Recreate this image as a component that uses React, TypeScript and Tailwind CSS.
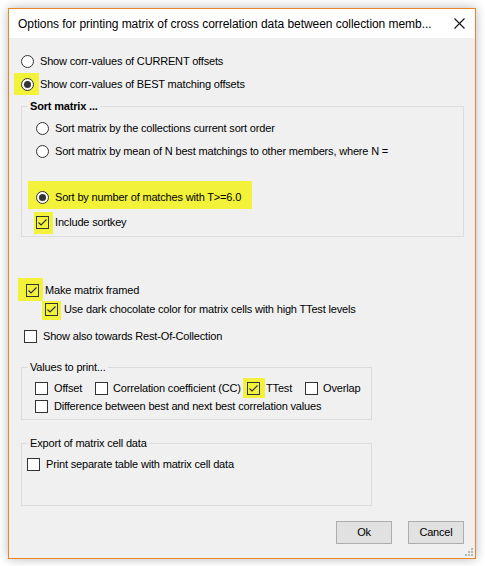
import React from "react";

const Radio = ({ checked = false }: { checked?: boolean }) => (
  <span className="relative flex h-[13px] w-[13px] shrink-0 items-center justify-center rounded-full border border-[#333333] bg-white">
    {checked && <span className="h-[7px] w-[7px] rounded-full bg-[#333333]" />}
  </span>
);

const Check = ({ checked = false, yellow = false }: { checked?: boolean; yellow?: boolean }) => (
  <span
    className={
      "relative flex h-[13px] w-[13px] shrink-0 items-center justify-center border border-[#333333] " +
      (yellow ? "bg-transparent" : "bg-white")
    }
  >
    {checked && (
      <svg width="11" height="11" viewBox="0 0 11 11" className="block">
        <path d="M1.5 5.5 L4 8 L9.5 2.5" fill="none" stroke="#2b2b2b" strokeWidth="1.1" />
      </svg>
    )}
  </span>
);

export default function App() {
  return (
    <div className="h-[566px] w-[485px] bg-white pl-[8px] pt-[8px] text-[11px] tracking-[-0.17px] text-black" style={{ fontFamily: '"Liberation Sans", Arial, sans-serif' }}>
      <div className="flex h-[551px] w-[468px] flex-col border border-[#e9862a] bg-[#f0f0f0] shadow-[0_0_10px_rgba(0,0,0,0.28)]">
        {/* Title bar */}
        <div className="flex h-[29px] shrink-0 items-center bg-white pl-[9px] pr-[10px]">
          <span className="flex-1 whitespace-nowrap text-[12px] leading-none tracking-[-0.05px] text-black">
            Options for printing matrix of cross correlation data between collection memb...
          </span>
          <svg width="11" height="11" viewBox="0 0 11 11">
            <path d="M0.5 0.5 L10.5 10.5 M10.5 0.5 L0.5 10.5" stroke="#111" strokeWidth="1.1" />
          </svg>
        </div>

        {/* Content */}
        <div className="relative flex flex-1 flex-col">
          <div className="ml-[12px] mt-[15px] flex h-[16px] items-center">
            <Radio />
            <span className="ml-[6px]">Show corr-values of CURRENT offsets</span>
          </div>
          <div className="ml-[12px] mt-[7px] flex h-[16px] items-center">
            <span className="relative flex">
              <span className="absolute left-[-7px] top-[-5px] h-[22px] w-[25px] bg-[#f2f23a]" />
              <Radio checked />
            </span>
            <span className="relative ml-[6px]">Show corr-values of BEST matching offsets</span>
          </div>

          {/* Sort matrix group */}
          <div className="relative ml-[12px] mt-[14px] flex h-[131px] w-[443px] flex-col border border-[#dcdcdc] pl-[14px]">
            <span className="absolute left-[6px] top-[-8px] bg-[#f0f0f0] px-[2px] font-bold leading-[14px]">Sort matrix ...</span>
            <div className="mt-[13px] flex h-[16px] items-center">
              <Radio />
              <span className="ml-[6px]">Sort matrix by the collections current sort order</span>
            </div>
            <div className="mt-[7px] flex h-[16px] items-center">
              <Radio />
              <span className="ml-[6px]">Sort matrix by mean of N best matchings to other members, where N =</span>
            </div>
            <div className="relative mt-[30px] flex h-[16px] items-center">
              <span className="absolute left-[-8px] top-[-8px] h-[28px] w-[224px] bg-[#f2f23a]" />
              <span className="relative flex"><Radio checked /></span>
              <span className="relative ml-[6px]">Sort by number of matches with T&gt;=6.0</span>
            </div>
            <div className="mt-[9px] flex h-[16px] items-center">
              <span className="relative flex">
                <span className="absolute left-[-2px] top-[-4px] h-[22px] w-[19px] bg-[#f2f23a]" />
                <Check checked yellow />
              </span>
              <span className="ml-[6px]">Include sortkey</span>
            </div>
          </div>

          <div className="ml-[17px] mt-[45px] flex h-[16px] items-center">
            <span className="relative flex">
              <span className="absolute left-[-8px] top-[-6px] h-[23px] w-[25px] bg-[#f2f23a]" />
              <Check checked yellow />
            </span>
            <span className="ml-[6px]">Make matrix framed</span>
          </div>
          <div className="ml-[36px] mt-[3px] flex h-[16px] items-center">
            <span className="relative flex">
              <span className="absolute left-[-3px] top-[-2px] h-[19px] w-[19px] bg-[#f2f23a]" />
              <Check checked yellow />
            </span>
            <span className="ml-[6px]">Use dark chocolate color for matrix cells with high TTest levels</span>
          </div>
          <div className="ml-[15px] mt-[11px] flex h-[16px] items-center">
            <Check />
            <span className="ml-[6px]">Show also towards Rest-Of-Collection</span>
          </div>

          {/* Values to print */}
          <div className="relative ml-[12px] mt-[23px] flex h-[53px] w-[351px] flex-col border border-[#dcdcdc] pl-[13px]">
            <span className="absolute left-[6px] top-[-8px] bg-[#f0f0f0] px-[2px] leading-[14px]">Values to print...</span>
            <div className="mt-[12px] flex h-[16px] items-center">
              <div className="flex w-[60px] shrink-0 items-center">
                <Check />
                <span className="ml-[6px]">Offset</span>
              </div>
              <div className="flex w-[152px] shrink-0 items-center">
                <Check />
                <span className="ml-[5px] whitespace-nowrap">Correlation coefficient (CC)</span>
              </div>
              <div className="flex w-[58px] shrink-0 items-center">
                <span className="relative flex">
                  <span className="absolute left-[-4px] top-[-4px] h-[20px] w-[22px] bg-[#f2f23a]" />
                  <Check checked yellow />
                </span>
                <span className="ml-[6px]">TTest</span>
              </div>
              <div className="flex items-center">
                <Check />
                <span className="ml-[5px]">Overlap</span>
              </div>
            </div>
            <div className="mt-[2px] flex h-[16px] items-center">
              <Check />
              <span className="ml-[6px]">Difference between best and next best correlation values</span>
            </div>
          </div>

          {/* Export group */}
          <div className="relative ml-[12px] mt-[23px] flex h-[63px] w-[351px] flex-col border border-[#dcdcdc] pl-[5px]">
            <span className="absolute left-[6px] top-[-8px] bg-[#f0f0f0] px-[2px] leading-[14px]">Export of matrix cell data</span>
            <div className="mt-[12px] flex h-[16px] items-center">
              <Check />
              <span className="ml-[6px]">Print separate table with matrix cell data</span>
            </div>
          </div>

          {/* Buttons */}
          <div className="mr-[11px] mt-[15px] flex justify-end gap-[16px]">
            <button className="flex h-[23px] w-[56px] items-center justify-center border border-[#adadad] bg-[#e1e1e1] text-[11px] text-black">Ok</button>
            <button className="flex h-[23px] w-[56px] items-center justify-center border border-[#adadad] bg-[#e1e1e1] text-[11px] text-black">Cancel</button>
          </div>

          {/* Resize grip */}
          <svg width="8" height="8" viewBox="0 0 8 8" className="absolute bottom-[2px] right-[2px]">
            <rect x="6" y="0" width="2" height="2" fill="#b8b8b8" />
            <rect x="3" y="3" width="2" height="2" fill="#b8b8b8" />
            <rect x="6" y="3" width="2" height="2" fill="#b8b8b8" />
            <rect x="0" y="6" width="2" height="2" fill="#b8b8b8" />
            <rect x="3" y="6" width="2" height="2" fill="#b8b8b8" />
            <rect x="6" y="6" width="2" height="2" fill="#b8b8b8" />
          </svg>
        </div>
      </div>
    </div>
  );
}
